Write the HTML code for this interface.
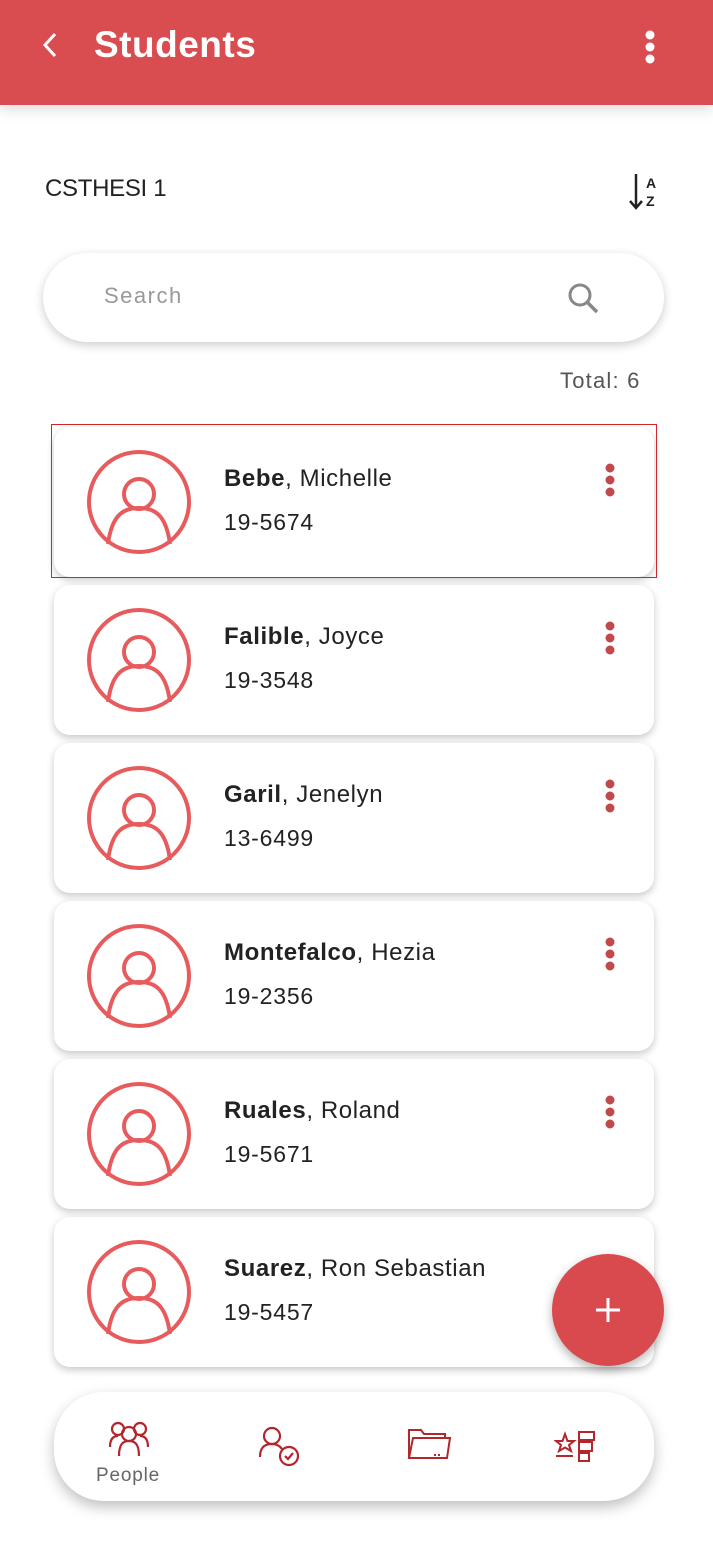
<!DOCTYPE html>
<html><head><meta charset="utf-8"><style>
*{margin:0;padding:0;box-sizing:border-box}
body{width:713px;height:1561px;background:#fff;font-family:"Liberation Sans",sans-serif;position:relative;overflow:hidden}
.hdr{position:absolute;left:0;top:0;width:713px;height:105px;background:#d94c50;box-shadow:0 4px 14px rgba(0,0,0,.15)}
.hdr .t{position:absolute;left:94px;top:24px;color:#fff;font-size:37px;font-weight:bold;letter-spacing:0.5px}
.abs{position:absolute}
.card{position:absolute;left:54px;width:600px;height:150px;background:#fff;border-radius:16px;box-shadow:0 3px 8px rgba(0,0,0,.22)}
.card svg.av{position:absolute;left:32px;top:22px}
.card .n{position:absolute;left:170px;top:38px;font-size:24px;color:#222;letter-spacing:0.6px}
.card .n b{font-weight:bold}
.card .id{position:absolute;left:170px;top:82px;font-size:23px;color:#222;letter-spacing:0.8px}
.card .dots{position:absolute;left:550px;top:36px}
.search{position:absolute;left:43px;top:253px;width:621px;height:89px;border-radius:45px;background:#fff;box-shadow:0 3px 10px rgba(0,0,0,.2)}
</style></head><body>
<div class="hdr">
<svg class="abs" style="left:38px;top:30px" width="24" height="30"><path d="M17 4 L7 15 L17 26" stroke="#fff" stroke-width="3" fill="none"/></svg>
<div class="t">Students</div>
<svg class="abs" style="left:640px;top:30px" width="20" height="36"><circle cx="10" cy="5" r="4.5" fill="#fff"/><circle cx="10" cy="17" r="4.5" fill="#fff"/><circle cx="10" cy="29" r="4.5" fill="#fff"/></svg>
</div>
<div class="abs" style="left:45px;top:175px;font-size:24px;color:#222;letter-spacing:-0.3px">CSTHESI 1</div>
<svg class="abs" style="left:628px;top:172px" width="34" height="40"><path d="M8 2 V36 M2 29 L8 36 L14 29" stroke="#222" stroke-width="2.5" fill="none"/><text x="18" y="16" font-size="14" font-weight="bold" fill="#222" font-family="Liberation Sans">A</text><text x="18" y="34" font-size="14" font-weight="bold" fill="#222" font-family="Liberation Sans">Z</text></svg>
<div class="search"><div class="abs" style="left:61px;top:30px;font-size:22px;color:#999;letter-spacing:1.5px">Search</div>
<svg class="abs" style="left:524px;top:29px" width="34" height="34"><circle cx="13" cy="13" r="10" stroke="#888" stroke-width="3" fill="none"/><path d="M20 20 L30 30" stroke="#888" stroke-width="3.5"/></svg></div>
<div class="abs" style="left:560px;top:368px;font-size:22px;color:#555;letter-spacing:1.2px">Total: 6</div>

<div class="card" style="top:427px"><svg class="av" width="106" height="106" viewBox="0 0 106 106"><circle cx="53" cy="53" r="50" stroke="#e85b5d" stroke-width="4" fill="none"/><circle cx="53" cy="45" r="15" stroke="#e85b5d" stroke-width="4" fill="none"/><path d="M22 95 C26 65 38 59 53 59 C68 59 80 65 84 95" stroke="#e85b5d" stroke-width="4" fill="none"/></svg><div class="n"><b>Bebe</b>, Michelle</div><div class="id">19-5674</div><svg class="dots" width="12" height="36"><circle cx="6" cy="5" r="4.5" fill="#c0494c"/><circle cx="6" cy="17" r="4.5" fill="#c0494c"/><circle cx="6" cy="29" r="4.5" fill="#c0494c"/></svg></div>
<div class="abs" style="left:51px;top:424px;width:606px;height:154px;border:1px solid #d0252d"></div>

<div class="card" style="top:585px"><svg class="av" width="106" height="106" viewBox="0 0 106 106"><circle cx="53" cy="53" r="50" stroke="#e85b5d" stroke-width="4" fill="none"/><circle cx="53" cy="45" r="15" stroke="#e85b5d" stroke-width="4" fill="none"/><path d="M22 95 C26 65 38 59 53 59 C68 59 80 65 84 95" stroke="#e85b5d" stroke-width="4" fill="none"/></svg><div class="n"><b>Falible</b>, Joyce</div><div class="id">19-3548</div><svg class="dots" width="12" height="36"><circle cx="6" cy="5" r="4.5" fill="#c0494c"/><circle cx="6" cy="17" r="4.5" fill="#c0494c"/><circle cx="6" cy="29" r="4.5" fill="#c0494c"/></svg></div>

<div class="card" style="top:743px"><svg class="av" width="106" height="106" viewBox="0 0 106 106"><circle cx="53" cy="53" r="50" stroke="#e85b5d" stroke-width="4" fill="none"/><circle cx="53" cy="45" r="15" stroke="#e85b5d" stroke-width="4" fill="none"/><path d="M22 95 C26 65 38 59 53 59 C68 59 80 65 84 95" stroke="#e85b5d" stroke-width="4" fill="none"/></svg><div class="n"><b>Garil</b>, Jenelyn</div><div class="id">13-6499</div><svg class="dots" width="12" height="36"><circle cx="6" cy="5" r="4.5" fill="#c0494c"/><circle cx="6" cy="17" r="4.5" fill="#c0494c"/><circle cx="6" cy="29" r="4.5" fill="#c0494c"/></svg></div>

<div class="card" style="top:901px"><svg class="av" width="106" height="106" viewBox="0 0 106 106"><circle cx="53" cy="53" r="50" stroke="#e85b5d" stroke-width="4" fill="none"/><circle cx="53" cy="45" r="15" stroke="#e85b5d" stroke-width="4" fill="none"/><path d="M22 95 C26 65 38 59 53 59 C68 59 80 65 84 95" stroke="#e85b5d" stroke-width="4" fill="none"/></svg><div class="n"><b>Montefalco</b>, Hezia</div><div class="id">19-2356</div><svg class="dots" width="12" height="36"><circle cx="6" cy="5" r="4.5" fill="#c0494c"/><circle cx="6" cy="17" r="4.5" fill="#c0494c"/><circle cx="6" cy="29" r="4.5" fill="#c0494c"/></svg></div>

<div class="card" style="top:1059px"><svg class="av" width="106" height="106" viewBox="0 0 106 106"><circle cx="53" cy="53" r="50" stroke="#e85b5d" stroke-width="4" fill="none"/><circle cx="53" cy="45" r="15" stroke="#e85b5d" stroke-width="4" fill="none"/><path d="M22 95 C26 65 38 59 53 59 C68 59 80 65 84 95" stroke="#e85b5d" stroke-width="4" fill="none"/></svg><div class="n"><b>Ruales</b>, Roland</div><div class="id">19-5671</div><svg class="dots" width="12" height="36"><circle cx="6" cy="5" r="4.5" fill="#c0494c"/><circle cx="6" cy="17" r="4.5" fill="#c0494c"/><circle cx="6" cy="29" r="4.5" fill="#c0494c"/></svg></div>

<div class="card" style="top:1217px"><svg class="av" width="106" height="106" viewBox="0 0 106 106"><circle cx="53" cy="53" r="50" stroke="#e85b5d" stroke-width="4" fill="none"/><circle cx="53" cy="45" r="15" stroke="#e85b5d" stroke-width="4" fill="none"/><path d="M22 95 C26 65 38 59 53 59 C68 59 80 65 84 95" stroke="#e85b5d" stroke-width="4" fill="none"/></svg><div class="n"><b>Suarez</b>, Ron Sebastian</div><div class="id">19-5457</div></div>

<div class="abs" style="left:552px;top:1254px;width:112px;height:112px;border-radius:50%;background:#d94a4e;box-shadow:0 4px 10px rgba(0,0,0,.3)">
<svg class="abs" style="left:42px;top:42px" width="28" height="28"><path d="M14 2 V26 M2 14 H26" stroke="#fff" stroke-width="3"/></svg></div>

<div class="abs" style="left:54px;top:1392px;width:600px;height:109px;border-radius:50px;background:#fff;box-shadow:0 6px 14px rgba(0,0,0,.25)">
<svg class="abs" style="left:54px;top:28px" width="42" height="38" fill="none" stroke="#b2262c" stroke-width="2.2"><circle cx="10" cy="9" r="6"/><circle cx="32" cy="9" r="6"/><circle cx="21" cy="14" r="7"/><path d="M2 27 C2 18 6 16 10 16 M40 27 C40 18 36 16 32 16 M11 36 C11 24 15 21 21 21 C27 21 31 24 31 36"/></svg>
<div class="abs" style="left:42px;top:73px;font-size:19px;color:#666;letter-spacing:0.8px">People</div>
<svg class="abs" style="left:204px;top:34px" width="46" height="42" fill="none" stroke="#b2262c" stroke-width="2.2"><circle cx="14" cy="10" r="8"/><path d="M2 31 C2 21 7 18 14 18 C19 18 22 20 24 23"/><circle cx="31" cy="30" r="9"/><path d="M27 30 L30 33 L35 27"/></svg>
<svg class="abs" style="left:353px;top:36px" width="46" height="34" fill="none" stroke="#b2262c" stroke-width="2"><path d="M2 30 V2 H14 L17 6 H38 V10 M2 30 L6 10 H43 L40 30 Z"/><path d="M27 27 H35" stroke-dasharray="2 2"/></svg>
<svg class="abs" style="left:500px;top:38px" width="50" height="34" fill="none" stroke="#b2262c" stroke-width="2"><path d="M11 4 L13.5 11 L20 11 L15 15 L17 21 L11 17.5 L5 21 L7 15 L2 11 L8.5 11 Z"/><path d="M2 26 H19 M25 2 H40 V10 H25 Z M25 12 H38 V21 H25 Z M25 23 H35 V31 H25 Z"/></svg>
</div>
</body></html>
